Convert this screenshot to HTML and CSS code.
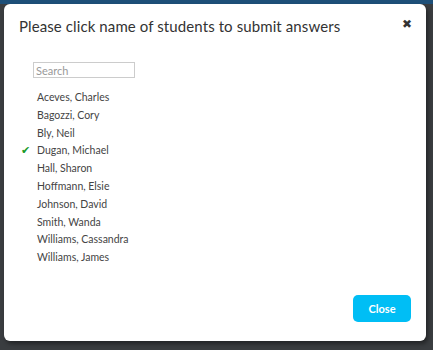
FILE: index.html
```html
<!DOCTYPE html>
<html lang="en">

<head>
    <meta charset="UTF-8">
    <meta name="viewport" content="width=device-width, initial-scale=1.0">
    <title>Submit answers</title>
    <link rel="stylesheet" href="styles.css">
</head>

<body>
    <div class="backdrop">
        <div class="modal">
            <div class="modal-header">
                <h2>Please click name of students to submit answers</h2>
                <span class="close-x">&#x2716;</span>
            </div>
            <div class="modal-body">
                <input class="search" type="text" placeholder="Search">
                <ul class="students">
                    <li>Aceves, Charles</li>
                    <li>Bagozzi, Cory</li>
                    <li>Bly, Neil</li>
                    <li class="done">Dugan, Michael</li>
                    <li>Hall, Sharon</li>
                    <li>Hoffmann, Elsie</li>
                    <li>Johnson, David</li>
                    <li>Smith, Wanda</li>
                    <li>Williams, Cassandra</li>
                    <li>Williams, James</li>
                </ul>
            </div>
            <div class="modal-footer">
                <button class="btn-close">Close</button>
            </div>
        </div>
    </div>
</body>

</html>
```

FILE: styles.css
```css
body {
    margin: 0;
    padding: 0;
    font-family: Lato, "Open Sans", sans-serif;
    background-color: #3a3d40;
}

.backdrop {
    height: 350px;
    padding: 4px 7px 9px 4px;
    box-sizing: border-box;
    background: linear-gradient(#1d4f78 0, #1d4f78 4px, #3a3d40 4px);
}

.modal {
    height: 100%;
    background-color: #fff;
    border-radius: 6px;
    display: flex;
    flex-direction: column;
    box-shadow: 2px 3px 4px rgba(0, 0, 0, 0.4);
}

.modal-header {
    display: flex;
    justify-content: space-between;
    padding: 13px 14px 0 15px;
}

.modal-header h2 {
    margin: 0;
    font-size: 15px;
    font-weight: normal;
    color: #333;
    letter-spacing: 0.1px;
}

.close-x {
    font-size: 12px;
    color: #333;
    font-family: "DejaVu Sans", sans-serif;
}

.modal-body {
    flex: 1;
    padding: 27px 0 0 29px;
}

.search {
    width: 102px;
    height: 16px;
    box-sizing: border-box;
    border: 1px solid #ccc;
    padding: 0 2px;
    font-family: inherit;
    font-size: 11px;
    margin: 0 0 11px 0;
    display: block;
}

.search::placeholder {
    color: #999;
}

.students {
    list-style: none;
    margin: 0;
    padding: 0 0 0 4px;
}

.students li {
    font-size: 10.5px;
    color: #444;
    height: 17.8px;
    line-height: 17.8px;
    position: relative;
}

.students li.done::before {
    content: "\2714";
    color: #1a9a2a;
    position: absolute;
    left: -16px;
    font-size: 11px;
    font-family: "DejaVu Sans", sans-serif;
}

.modal-footer {
    display: flex;
    justify-content: flex-end;
    padding: 0 15px 19px 0;
}

.btn-close {
    width: 58px;
    height: 27px;
    border: none;
    border-radius: 5px;
    background-color: #00bef5;
    color: #fff;
    font-family: inherit;
    font-size: 11px;
    font-weight: bold;
}
```
